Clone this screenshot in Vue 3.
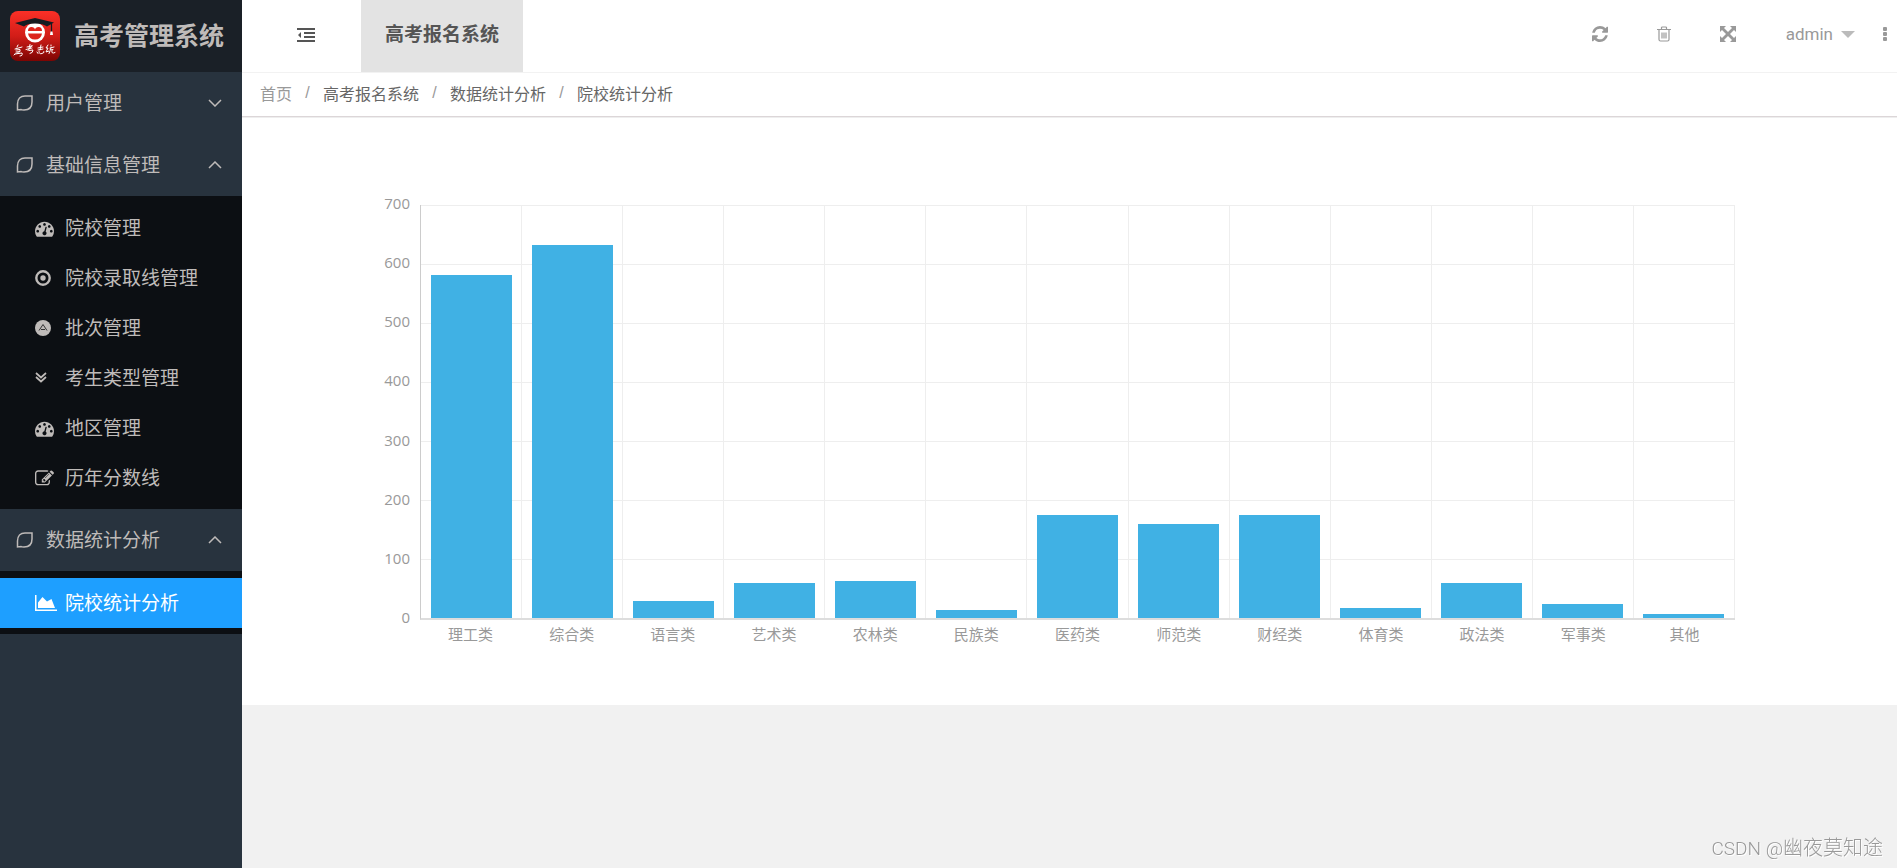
<script setup>
import { ref } from 'vue'

const icons = {
  dashboard: 'M384 1152q0-53-37.5-90.5t-90.5-37.5-90.5 37.5-37.5 90.5 37.5 90.5 90.5 37.5 90.5-37.5 37.5-90.5zm192-448q0-53-37.5-90.5t-90.5-37.5-90.5 37.5-37.5 90.5 37.5 90.5 90.5 37.5 90.5-37.5 37.5-90.5zm428 481l101-382q6-26-7.5-48.5t-38.5-29.5-48 6.5-30 39.5l-101 382q-60 5-107 43.5t-63 98.5q-20 77 20 146t117 89 146-20 89-117q16-60-6-117t-72-91zm660-33q0-53-37.5-90.5t-90.5-37.5-90.5 37.5-37.5 90.5 37.5 90.5 90.5 37.5 90.5-37.5 37.5-90.5zm-640-640q0-53-37.5-90.5t-90.5-37.5-90.5 37.5-37.5 90.5 37.5 90.5 90.5 37.5 90.5-37.5 37.5-90.5zm448 192q0-53-37.5-90.5t-90.5-37.5-90.5 37.5-37.5 90.5 37.5 90.5 90.5 37.5 90.5-37.5 37.5-90.5zm320 448q0 261-141 483-19 29-54 29h-1402q-35 0-54-29-141-221-141-483 0-182 71-348t191-286 286-191 348-71 348 71 286 191 191 286 71 348z',
  edit: 'M888 1184l116-116-152-152-116 116v56h96v96h56zm440-720q-16-16-33 1l-350 350q-17 17-1 33t33-1l350-350q17-17 1-33zm80 594v190q0 119-84.5 203.5t-203.5 84.5h-832q-119 0-203.5-84.5t-84.5-203.5v-832q0-119 84.5-203.5t203.5-84.5h832q63 0 117 25 15 7 18 23 3 17-9 29l-49 49q-14 14-32 8-23-6-45-6h-832q-66 0-113 47t-47 113v832q0 66 47 113t113 47h832q66 0 113-47t47-113v-126q0-13 9-22l64-64q15-15 35-7t20 29zm-96-738l288 288-672 672h-288v-288zm444 132l-92 92-288-288 92-92q28-28 68-28t68 28l152 152q28 28 28 68t-28 68z',
  refresh: 'M1639 1056q0 5-1 7-64 268-268 434.5t-478 166.5q-146 0-282.5-55t-243.5-157l-129 129q-19 19-45 19t-45-19-19-45v-448q0-26 19-45t45-19h448q26 0 45 19t19 45-19 45l-137 137q71 66 161 102t187 36q134 0 250-65t186-179q11-17 53-117 8-23 30-23h192q13 0 22.5 9.5t9.5 22.5zm25-800v448q0 26-19 45t-45 19h-448q-26 0-45-19t-19-45 19-45l138-138q-148-137-349-137-134 0-250 65t-186 179q-11 17-53 117-8 23-30 23h-199q-13 0-22.5-9.5t-9.5-22.5v-7q65-268 270-434.5t480-166.5q146 0 284 55.5t245 156.5l130-129q19-19 45-19t45 19 19 45z'
}

const menus = ref([
  { title: '用户管理', open: false, items: [] },
  {
    title: '基础信息管理',
    open: true,
    items: [
      { icon: 'dashboard', text: '院校管理' },
      { icon: 'target', text: '院校录取线管理' },
      { icon: 'batch', text: '批次管理' },
      { icon: 'double-down', text: '考生类型管理' },
      { icon: 'dashboard', text: '地区管理' },
      { icon: 'edit', text: '历年分数线' }
    ]
  },
  {
    title: '数据统计分析',
    open: true,
    items: [{ icon: 'area', text: '院校统计分析', active: true }]
  }
])

const crumbs = ['高考报名系统', '数据统计分析', '院校统计分析']

const max = 700
const ticks = [700, 600, 500, 400, 300, 200, 100, 0]
const series = [
  { name: '理工类', value: 581 },
  { name: '综合类', value: 633 },
  { name: '语言类', value: 29 },
  { name: '艺术类', value: 60 },
  { name: '农林类', value: 63 },
  { name: '民族类', value: 14 },
  { name: '医药类', value: 175 },
  { name: '师范类', value: 160 },
  { name: '财经类', value: 175 },
  { name: '体育类', value: 17 },
  { name: '政法类', value: 60 },
  { name: '军事类', value: 24 },
  { name: '其他', value: 7 }
]
</script>

<template>
  <div class="layout">
    <aside class="side">
      <div class="brand">
        <svg class="logo" viewBox="0 0 50 50" aria-hidden="true">
          <defs>
            <linearGradient id="logo-red" x1="0" y1="0" x2="0" y2="1">
              <stop offset="0" stop-color="#fb3027" />
              <stop offset="0.5" stop-color="#d21d18" />
              <stop offset="1" stop-color="#7d0503" />
            </linearGradient>
          </defs>
          <rect width="50" height="50" rx="8" fill="url(#logo-red)" />
          <circle cx="25" cy="21.500" r="10" fill="#fff" />
          <path d="M18 20q0-4 3.500-4 3 0 3.500 2.500.5-2.500 3.500-2.500 3.500 0 3.500 4zM18 22.500h14q-1 6-7 6t-7-6z" fill="#dc241d" />
          <path d="M5 12l20-5 19 4.500-7 4q-4-3-12-3t-11 3z" fill="#151c22" />
          <path d="M34 11l7.500 1v9" fill="none" stroke="#151c22" stroke-width="1.200" />
          <path d="M40.500 20.500h2l.5 3.500h-3z" fill="#fff" />
          <g fill="none" stroke="#fff" stroke-width="1" stroke-linecap="round">
            <path d="M8 34l-1 2m-2 2l7-2m-6 3l4-.5v2l-4 .5m-1 2l-1 1m1-1l7-1q1 3-2 3M7 42h2" />
            <path d="M17 36l5-1m-2-1.500l-1 4m-3 1l6-1.500m0-2.500l-4 5m1 0l4-.5q0 3-3 3.500" />
            <path d="M28 37l5-1m-2-2l-1 5m-2 0l5-1m-6 3l1 1.500m1-2q0 3 3 2t2-2" />
            <path d="M38 34l-2 3 2 0-2 4 3-1m2-5v-1m-1 3l4-1m-3 1l-1 2 3-.5m-3 1.500l-1 2.500m3-3q-1 4 3 2" />
          </g>
        </svg>
        <h1>高考管理系统</h1>
      </div>

      <nav>
        <div v-for="menu in menus" :key="menu.title">
          <button class="group" type="button" :aria-expanded="menu.open" @click="menu.open = !menu.open">
            <svg class="leaf" viewBox="0 0 18 18" aria-hidden="true">
              <path d="M16 2v6c0 5-3 8-8 8-1.500 0-2.500 0-3-.5l-3.500.5V10c0-5 3-8 7.500-8z" />
            </svg>
            <span class="label">{{ menu.title }}</span>
            <svg class="chevron" viewBox="0 0 14 8" aria-hidden="true">
              <path :d="menu.open ? 'M1 7l6-6 6 6' : 'M1 1l6 6 6-6'" />
            </svg>
          </button>
          <ul v-if="menu.open && menu.items.length">
            <li v-for="item in menu.items" :key="item.text">
              <a href="#" :class="{ active: item.active }">
                <span class="item-icon">
                  <svg v-if="item.icon === 'dashboard' || item.icon === 'edit'" class="wide" viewBox="0 0 1792 1792" aria-hidden="true">
                    <path :d="icons[item.icon]" />
                  </svg>
                  <svg v-else-if="item.icon === 'target'" class="round" viewBox="0 0 16 16" aria-hidden="true">
                    <circle cx="8" cy="8" r="6.700" fill="none" stroke="currentColor" stroke-width="2.400" />
                    <circle cx="8" cy="8" r="2.700" />
                  </svg>
                  <svg v-else-if="item.icon === 'batch'" class="round" viewBox="0 0 16 16" aria-hidden="true">
                    <circle cx="8" cy="8" r="8" />
                    <path d="M4 10.500l4-6 4 6M6 9.500h4" fill="none" stroke="#333" />
                  </svg>
                  <svg v-else-if="item.icon === 'double-down'" class="small" viewBox="0 0 12 12" aria-hidden="true">
                    <path d="M1 1l5 4.500L11 1M1 5l5 4.500L11 5" fill="none" stroke="currentColor" stroke-width="1.700" />
                  </svg>
                  <svg v-else class="area" viewBox="0 0 22 16" aria-hidden="true">
                    <path d="M0 0h1.500v14.500H22V16H0z" />
                    <path d="M3 13V7.500L7.500 2l4.500 4.500L16.500 4 20 13z" />
                  </svg>
                </span>
                <span class="label">{{ item.text }}</span>
              </a>
            </li>
          </ul>
        </div>
      </nav>
    </aside>

    <div class="content">
      <header class="topbar">
        <button class="toggle" type="button" aria-label="收起菜单">
          <svg viewBox="0 0 18 14" aria-hidden="true">
            <path d="M0 0h18v2H0zM7 4h11v2H7zM7 8h11v2H7zM0 12h18v2H0zM4 4v6L1 7z" />
          </svg>
        </button>
        <a class="tab" href="#">高考报名系统</a>
        <div class="tools">
          <button type="button" aria-label="刷新">
            <svg viewBox="128 128 1536 1536" aria-hidden="true"><path :d="icons.refresh" /></svg>
          </button>
          <button type="button" aria-label="清理缓存">
            <svg viewBox="0 0 16 16" aria-hidden="true">
              <path d="M1 3.500h14M5.500 3V1.500Q5.500 1 6.500 1h3q1 0 1 .5V3M3 4v9.500Q3 15 4.500 15h7q1.500 0 1.500-1.500V4M6 6.500v6M8 6.500v6M10 6.500v6" fill="none" stroke="currentColor" stroke-width="1.200" />
            </svg>
          </button>
          <button type="button" aria-label="全屏">
            <svg viewBox="0 0 16 16" aria-hidden="true">
              <path d="M0 0h6L4 2l4 4 4-4-2-2h6v6l-2-2-4 4 4 4 2-2v6h-6l2-2-4-4-4 4 2 2H0v-6l2 2 4-4-4-4-2 2z" />
            </svg>
          </button>
          <button class="user" type="button">
            <span>admin</span>
            <svg class="caret" viewBox="0 0 14 7" aria-hidden="true"><path d="M0 0h14L7 7z" /></svg>
          </button>
          <button class="more" type="button" aria-label="更多">
            <svg viewBox="0 0 4 14" aria-hidden="true">
              <rect width="4" height="4" rx="1" />
              <rect y="5" width="4" height="4" rx="1" />
              <rect y="10" width="4" height="4" rx="1" />
            </svg>
          </button>
        </div>
      </header>

      <nav class="crumbs" aria-label="breadcrumb">
        <a href="#">首页</a>
        <template v-for="c in crumbs" :key="c">
          <i>/</i><span>{{ c }}</span>
        </template>
      </nav>

      <main>
        <div class="chart">
          <div class="y-axis">
            <span v-for="t in ticks" :key="t">{{ t }}</span>
          </div>
          <div class="plot">
            <div class="rows"><div v-for="n in 7" :key="n"></div></div>
            <div class="cols">
              <div v-for="s in series" :key="s.name">
                <div class="bar" :style="{ height: (s.value / max) * 100 + '%' }"></div>
              </div>
            </div>
          </div>
          <div class="x-axis">
            <span v-for="s in series" :key="s.name">{{ s.name }}</span>
          </div>
        </div>
      </main>
    </div>

    <div class="watermark"><span class="latin">CSDN @</span>幽夜莫知途</div>
  </div>
</template>

<style>
body {
  margin: 0;
  background: #f1f1f1;
}
</style>

<style scoped>
.layout {
  display: flex;
  min-height: 100vh;
  font-family: "Liberation Sans", "Noto Sans CJK SC", sans-serif;
  color: #555;
}

svg {
  display: block;
  fill: currentColor;
}

button {
  border: 0;
  padding: 0;
  background: none;
  font: inherit;
  color: inherit;
  cursor: pointer;
}

a {
  color: inherit;
  text-decoration: none;
}

.side {
  flex: 0 0 242px;
  background: #28333e;
  color: #bfbbb9;
  font-size: 19px;
}

.brand {
  display: flex;
  align-items: center;
  gap: 14px;
  height: 72px;
  padding: 0 10px;
  box-sizing: border-box;
  background: #1a2027;
}

.logo {
  width: 50px;
  height: 50px;
}

h1 {
  margin: 0;
  font-size: 25px;
  line-height: 36px;
  font-weight: 700;
  white-space: nowrap;
}

.group {
  display: flex;
  align-items: center;
  width: 100%;
  height: 62px;
  padding: 0 20px 0 16px;
  text-align: left;
}

.label {
  padding-bottom: 4px;
}

.leaf {
  width: 18px;
  height: 18px;
  margin-right: 12px;
}

.leaf path,
.chevron path {
  fill: none;
  stroke: currentColor;
  stroke-width: 1.5;
}

.chevron {
  width: 14px;
  height: 8px;
  margin-left: auto;
}

ul {
  margin: 0;
  padding: 7px 0 6px;
  list-style: none;
  background: #0c0f13;
}

li a {
  display: flex;
  align-items: center;
  height: 50px;
  padding-left: 35px;
}

li a.active {
  background: #1e9fff;
  color: #fff;
}

.item-icon {
  width: 30px;
}

.wide {
  width: 19px;
  height: 19px;
}

.round {
  width: 16px;
  height: 16px;
}

.small {
  width: 12px;
  height: 12px;
}

.area {
  width: 22px;
  height: 16px;
}

.content {
  flex: 1;
  min-width: 0;
}

.topbar {
  display: flex;
  height: 72px;
  border-bottom: 1px solid #f2f2f2;
  background: #fff;
}

.toggle {
  width: 119px;
  padding: 0 46px 2px 55px;
}

.toggle svg {
  width: 18px;
  height: 14px;
}

.tab {
  padding: 0 24px;
  background: #e3e3e3;
  font-size: 19px;
  line-height: 70px;
  font-weight: 700;
}

.tools {
  display: flex;
  align-items: center;
  gap: 48px;
  margin-left: auto;
  padding: 0 10px 4px 0;
  color: #999;
}

.tools svg {
  width: 16px;
  height: 16px;
}

.tools .user {
  display: flex;
  align-items: center;
  gap: 8px;
  margin-left: 2px;
  font-family: Roboto, sans-serif;
  font-size: 17px;
}

.tools .caret {
  width: 14px;
  height: 7px;
  fill: #bbb;
}

.tools .more {
  margin-left: -20px;
}

.tools .more svg {
  width: 4px;
  height: 14px;
}

.crumbs {
  display: flex;
  align-items: center;
  height: 40px;
  padding: 0 0 3px 18px;
  border-bottom: 1px solid #dcd6d8;
  background: #fff;
  font-size: 16px;
  color: #666;
}

.crumbs a,
.crumbs i {
  color: #999;
}

.crumbs i {
  width: 31px;
  text-align: center;
  font-style: normal;
}

main {
  padding: 87px 162px 57px 138px;
  border-top: 1px solid #eee;
  background: #fff;
}

.chart {
  display: grid;
  grid-template-columns: 30px 1fr;
  grid-template-rows: 415px 28px;
  column-gap: 10px;
  font-family: "Open Sans", "Noto Sans CJK SC", sans-serif;
  font-size: 15px;
  color: #999;
}

.y-axis {
  display: flex;
  flex-direction: column;
  justify-content: space-between;
  margin: -12px 0 -7px;
  line-height: 20px;
  text-align: right;
}

.plot {
  display: grid;
  border-left: 1px solid #ccc;
  border-bottom: 2px solid #ddd;
}

.rows,
.cols {
  grid-area: 1 / 1;
  display: grid;
}

.rows {
  grid-template-rows: repeat(7, 1fr);
}

.rows div {
  border-top: 1px solid #eee;
}

.cols,
.x-axis {
  display: grid;
  grid-template-columns: repeat(13, 1fr);
}

.cols > div {
  display: flex;
  align-items: flex-end;
  justify-content: center;
  border-right: 1px solid #eee;
}

.bar {
  width: 81%;
  background: #40b1e4;
}

.x-axis {
  grid-column: 2;
  padding-top: 2px;
  line-height: 24px;
  text-align: center;
}

.watermark {
  position: fixed;
  right: 14px;
  bottom: 5px;
  font-size: 20px;
  line-height: 28px;
  font-weight: 300;
  color: #999;
  text-shadow: 1px 1px #fff;
}

.latin {
  font-family: Roboto, sans-serif;
  font-size: 19px;
}
</style>
